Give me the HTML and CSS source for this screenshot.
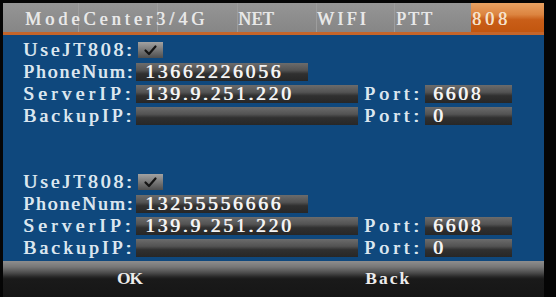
FILE: index.html
```html
<!DOCTYPE html>
<html>
<head>
<meta charset="utf-8">
<link rel="stylesheet" href="styles.css">
</head>
<body>
<div class="screen">
  <div class="tabs">
    <div class="tab tab-wide">ModeCenter3/4G</div>
    <div class="tab tab-net">NET</div>
    <div class="tab tab-wifi">WIFI</div>
    <div class="tab tab-ptt">PTT</div>
    <div class="tab tab-active">808</div>
  </div>
  <div class="panel">
    <div class="group">
      <div class="row">
        <span class="label label-use">UseJT808:</span>
        <span class="check"><svg width="25" height="16" viewBox="0 0 25 16"><path d="M7.5 8.5 L11 12 L17.5 4.5" fill="none" stroke="#141414" stroke-width="2.2" stroke-linecap="round" stroke-linejoin="round"/></svg></span>
      </div>
      <div class="row">
        <span class="label label-phone">PhoneNum:</span>
        <span class="box box-phone">13662226056</span>
      </div>
      <div class="row">
        <span class="label label-server">ServerIP:</span>
        <span class="box box-ip">139.9.251.220</span>
        <span class="port-label">Port:</span>
        <span class="box box-port">6608</span>
      </div>
      <div class="row">
        <span class="label label-backup">BackupIP:</span>
        <span class="box box-ip"></span>
        <span class="port-label">Port:</span>
        <span class="box box-port">0</span>
      </div>
    </div>
    <div class="group group-second">
      <div class="row">
        <span class="label label-use">UseJT808:</span>
        <span class="check"><svg width="25" height="16" viewBox="0 0 25 16"><path d="M7.5 8.5 L11 12 L17.5 4.5" fill="none" stroke="#141414" stroke-width="2.2" stroke-linecap="round" stroke-linejoin="round"/></svg></span>
      </div>
      <div class="row">
        <span class="label label-phone">PhoneNum:</span>
        <span class="box box-phone">13255556666</span>
      </div>
      <div class="row">
        <span class="label label-server">ServerIP:</span>
        <span class="box box-ip">139.9.251.220</span>
        <span class="port-label">Port:</span>
        <span class="box box-port">6608</span>
      </div>
      <div class="row">
        <span class="label label-backup">BackupIP:</span>
        <span class="box box-ip"></span>
        <span class="port-label">Port:</span>
        <span class="box box-port">0</span>
      </div>
    </div>
  </div>
  <div class="footer">
    <span class="btn btn-ok">OK</span>
    <span class="btn btn-back">Back</span>
  </div>
</div>
</body>
</html>
```
FILE: styles.css
```css
* { box-sizing: border-box; }
html, body {
  margin: 0;
  padding: 0;
  background: #050505;
  width: 556px;
  height: 297px;
  overflow: hidden;
}
body {
  font-family: "Liberation Serif", "Times New Roman", serif;
  font-weight: normal;
}
.screen {
  margin: 3px 0 0 3px;
  width: 541px;
  height: 294px;
  display: flex;
  flex-direction: column;
}
.tabs {
  height: 32px;
  display: flex;
  border-bottom: 3px solid #c4652a;
  background: linear-gradient(#959595, #868686);
}
.tab {
  height: 29px;
  font-size: 18px;
  line-height: 29px;
  padding-top: 2px;
  color: #e8e8e8;
  text-shadow: 0.6px 0 0 #e8e8e8;
  white-space: nowrap;
  border-left: 1px solid #9d9d9d;
}
.tab-wide {
  width: 234px;
  padding-left: 22px;
  letter-spacing: 4.1px;
  border-left: none;
  background-image:
    linear-gradient(#9e9e9e, #9e9e9e),
    linear-gradient(#9e9e9e, #9e9e9e);
  background-size: 1px 29px, 1px 29px;
  background-position: 75px 0, 154px 0;
  background-repeat: no-repeat;
}
.tab-net { width: 79px; padding-left: 0; letter-spacing: 0.3px; }
.tab-wifi { width: 78px; padding-left: 0; letter-spacing: 3.2px; }
.tab-ptt { width: 77px; padding-left: 1px; letter-spacing: 2px; }
.tab-active {
  width: 73px;
  padding-left: 1px;
  letter-spacing: 4px;
  border-left: none;
  color: #f6e2cc;
  text-shadow: 0.6px 0 0 #f6e2cc;
  background: linear-gradient(#e9a262 0%, #dc8440 40%, #c95e18 58%, #c2560f 100%);
}
.panel {
  height: 226px;
  background: #0f487d;
  padding-top: 4px;
}
.group-second {
  margin-top: 44px;
}
.row {
  height: 22px;
  display: flex;
  align-items: center;
  font-size: 19.5px;
}
.label {
  width: 133px;
  padding-left: 20px;
  color: #dbe6ef;
  text-shadow: 0.7px 0 0 #dbe6ef;
  line-height: 22px;
  white-space: nowrap;
}
.label-use { letter-spacing: 3px; }
.label-phone { letter-spacing: 2px; }
.label-server { letter-spacing: 4.2px; }
.label-backup { letter-spacing: 3.2px; }
.check {
  margin-left: 2px;
  width: 25px;
  height: 16px;
  background: linear-gradient(#a2a2a2 0%, #7c7c7c 45%, #4e4e4e 100%);
  display: flex;
}
.box {
  height: 18px;
  line-height: 18px;
  padding-left: 9px;
  color: #f4f4f4;
  text-shadow: 0.7px 0 0 #f4f4f4;
  letter-spacing: 2.8px;
  background: linear-gradient(#6c6c6c 0%, #535353 40%, #303030 60%, #272727 100%);
  white-space: nowrap;
}
.box-phone { width: 172px; }
.box-ip { width: 222px; }
.port-label {
  margin-left: 6px;
  width: 61px;
  color: #dbe6ef;
  text-shadow: 0.7px 0 0 #dbe6ef;
  line-height: 22px;
  letter-spacing: 4.2px;
}
.box-port { width: 87px; padding-left: 8px; }
.footer {
  height: 36px;
  display: flex;
  align-items: flex-start;
  background: linear-gradient(#8e8e8e 0px, #767676 6px, #4a4a4a 12px, #262626 16px, #1a1a1a 18px, #161616 36px);
}
.btn {
  font-size: 17.5px;
  line-height: 20px;
  color: #ececec;
  font-weight: bold;
  padding-top: 7px;
}
.btn-ok { margin-left: 114px; letter-spacing: -1px; }
.btn-back { margin-left: 223px; letter-spacing: 2px; }
```
